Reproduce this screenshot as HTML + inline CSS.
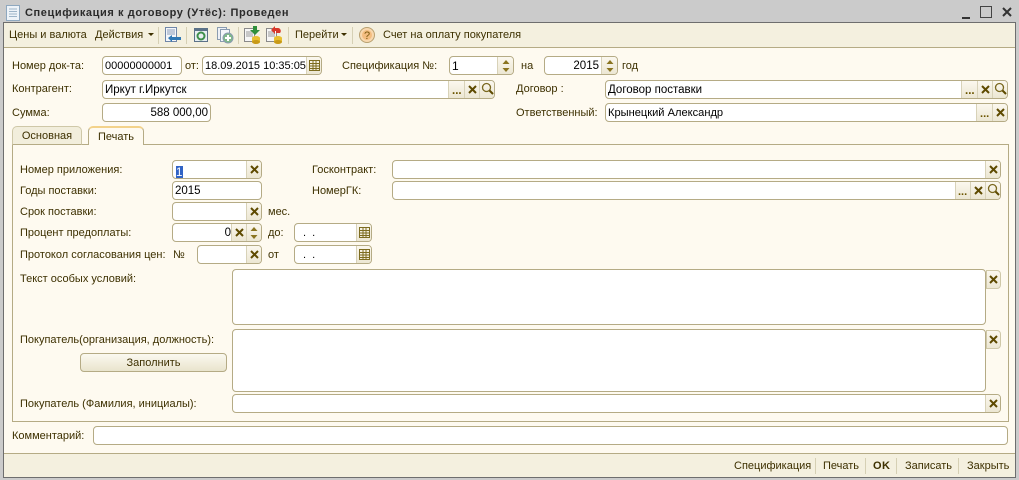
<!DOCTYPE html>
<html><head><meta charset="utf-8"><style>
html,body{margin:0;padding:0}
body{width:1019px;height:480px;position:relative;overflow:hidden;background:#cbcbcb;font:11px/14px "Liberation Sans",sans-serif;color:#3d3000}
div,span.a,svg{position:absolute}
.t{white-space:nowrap}
.f{background:#fff;border:1px solid #b5ab85;border-radius:4px;box-sizing:border-box;color:#000;white-space:nowrap;overflow:hidden;line-height:18px;padding-left:2px;font-size:11px}
.r{text-align:right;padding:0 2px 0 0}
.b{background:linear-gradient(#fbf8ee,#ece7d3);border-left:1px solid #d8d2b8;box-sizing:border-box;top:0;bottom:0}
.sep{width:1px;background:#d6d0b4;top:27px;height:17px}
.sep2{width:1px;background:#d6d0b4;top:458px;height:16px}
</style></head><body>
<!-- title -->
<svg style="left:6px;top:5px" width="14" height="16"><rect x=".5" y=".5" width="13" height="15" fill="#eef3f8" stroke="#8fa8bf"/><path d="M3 4h8M3 6.500h8M3 9h8M3 11.500h8" stroke="#9db4c8"/></svg>
<div class="t" style="left:25px;top:6px;font-weight:bold;font-size:11px;color:#2b2b2b;letter-spacing:.6px">Спецификация к договору (Утёс): Проведен</div>
<div style="left:962px;top:17px;width:8px;height:2px;background:#333"></div>
<svg style="left:980px;top:6px" width="32" height="13"><rect x=".5" y=".5" width="11" height="11" fill="none" stroke="#444"/><path d="M23 2l8 8M31 2l-8 8" stroke="#333" stroke-width="2"/></svg>
<!-- frame -->
<div style="left:3px;top:22px;width:1013px;height:456px;background:#fefaf0;border:1px solid #6e6e6e;box-sizing:border-box"></div>
<div style="left:4px;top:23px;width:1011px;height:24px;background:#f4f0df;border-bottom:1px solid #b5ab85"></div>
<div style="left:4px;top:453px;width:1011px;height:24px;background:#f4f0df;border-top:1px solid #b5ab85;box-sizing:border-box"></div>
<!-- toolbar -->
<div class="t" style="left:9px;top:28px">Цены и валюта</div>
<div class="t" style="left:95px;top:28px">Действия</div>
<svg style="left:148px;top:33px" width="6" height="4"><path d="M0 0h6l-3 3z" fill="#3d3000"/></svg>
<div class="sep" style="left:158px"></div>
<svg style="left:164px;top:27px" width="18" height="17"><rect x="1.500" y=".5" width="11" height="14" fill="#f4f6fa" stroke="#6f86a8"/><path d="M3 3h8M3 5h8M3 7h8" stroke="#8a9cb8"/><path d="M4 11l4-3v2h9v3H8v2z" fill="#2f78b4"/></svg>
<div class="sep" style="left:186px"></div>
<svg style="left:194px;top:28px" width="14" height="15"><rect x=".5" y=".5" width="13" height="13" fill="#e8eef2" stroke="#5b7288"/><rect x="1" y="1" width="12" height="2" fill="#5b7288"/><circle cx="7" cy="8" r="3.500" fill="none" stroke="#3d8f4a" stroke-width="2"/></svg>
<svg style="left:217px;top:27px" width="17" height="17"><rect x=".5" y=".5" width="9" height="12" fill="#eef1f6" stroke="#8a9cb0"/><rect x="3.500" y="2.500" width="9" height="12" fill="#f4f6fa" stroke="#8a9cb0"/><circle cx="11" cy="11" r="5" fill="#7fb88a" stroke="#8a9cb0"/><path d="M8 11h6M11 8v6" stroke="#fff" stroke-width="2"/></svg>
<div class="sep" style="left:238px"></div>
<svg style="left:244px;top:26px" width="17" height="18"><rect x=".5" y="2.500" width="10" height="13" fill="#f6f6f6" stroke="#8a8a8a"/><path d="M2 6h7M2 8h7M2 10h7" stroke="#999"/><path d="M9 0h4v4h3l-5 5-5-5h3z" fill="#2f8f3a"/><ellipse cx="12" cy="12" rx="4" ry="2" fill="#e8c030"/><rect x="8" y="12" width="8" height="4" fill="#e8c030"/><ellipse cx="12" cy="16" rx="4" ry="2" fill="#c89a18"/></svg>
<svg style="left:266px;top:26px" width="17" height="18"><rect x=".5" y="2.500" width="10" height="13" fill="#f6f6f6" stroke="#8a8a8a"/><path d="M2 6h7M2 8h7M2 10h7" stroke="#999"/><path d="M5 4l4-4v2h3a3 3 0 0 1 2 5h-4v-2h-1v3z" fill="#d8382a"/><ellipse cx="12" cy="12" rx="4" ry="2" fill="#e8c030"/><rect x="8" y="12" width="8" height="4" fill="#e8c030"/><ellipse cx="12" cy="16" rx="4" ry="2" fill="#c89a18"/></svg>
<div class="sep" style="left:288px"></div>
<div class="t" style="left:295px;top:28px">Перейти</div>
<svg style="left:341px;top:33px" width="6" height="4"><path d="M0 0h6l-3 3z" fill="#3d3000"/></svg>
<div class="sep" style="left:352px"></div>
<svg style="left:359px;top:27px" width="16" height="16"><circle cx="8" cy="8" r="7.500" fill="#f8d8ae" stroke="#b8a070"/><circle cx="8" cy="8" r="5" fill="#f4bd80"/><text x="5" y="12" font-size="11" fill="#7a5a10" font-family="Liberation Sans">?</text></svg>
<div class="t" style="left:383px;top:28px">Счет на оплату покупателя</div>
<!-- header fields -->
<div class="t" style="left:12px;top:59px">Номер док-та:</div>
<div class="f" style="left:102px;top:56px;width:80px;height:19px">00000000001</div>
<div class="t" style="left:185px;top:59px">от:</div>
<div class="f" style="left:202px;top:56px;width:120px;height:19px">18.09.2015 10:35:05<div class="b" style="right:0;width:15px"><svg style="left:2px;top:2px" width="11" height="13"><path d="M.5 1.500h10v10H.5zM.5 4.500h10M.5 7h10M.5 9.500h10M4 1.500v10M7 1.500v10" fill="none" stroke="#7d6c20"/></svg></div></div>
<div class="t" style="left:342px;top:59px">Спецификация №:</div>
<div class="f" style="left:449px;top:56px;width:65px;height:19px;font-size:12px">1<div class="b" style="right:0;width:16px"><svg style="left:4px;top:3px" width="8" height="12"><path d="M4 0l3.500 4H.5zM.5 8h7L4 12z" fill="#8a7420"/></svg></div></div>
<div class="t" style="left:521px;top:59px">на</div>
<div class="f r" style="left:544px;top:56px;width:74px;height:19px;padding-right:18px;font-size:11.500px">2015<div class="b" style="right:0;width:16px"><svg style="left:4px;top:3px" width="8" height="12"><path d="M4 0l3.500 4H.5zM.5 8h7L4 12z" fill="#8a7420"/></svg></div></div>
<div class="t" style="left:622px;top:59px">год</div>

<div class="t" style="left:12px;top:82px">Контрагент:</div>
<div class="f" style="left:102px;top:80px;width:393px;height:19px;font-size:11.500px">Иркут г.Иркутск<div class="b" style="right:30px;width:16px;color:#6b5500;font-weight:bold;line-height:20px;padding-left:3px">...</div><div class="b" style="right:15px;width:15px"><svg style="left:3px;top:4px" width="9" height="9"><path d="M1 1l7 7M8 1L1 8" stroke="#5e4a00" stroke-width="2"/></svg></div><div class="b" style="right:0;width:15px"><svg style="left:1px;top:1px" width="13" height="13"><circle cx="5.500" cy="5.500" r="4" fill="none" stroke="#7a6820" stroke-width="1.300"/><path d="M8.500 8.500l3.500 3.500" stroke="#5e4a00" stroke-width="2"/></svg></div></div>
<div class="t" style="left:516px;top:82px">Договор :</div>
<div class="f" style="left:605px;top:80px;width:403px;height:19px;font-size:11.500px">Договор поставки<div class="b" style="right:30px;width:16px;color:#6b5500;font-weight:bold;line-height:20px;padding-left:3px">...</div><div class="b" style="right:15px;width:15px"><svg style="left:3px;top:4px" width="9" height="9"><path d="M1 1l7 7M8 1L1 8" stroke="#5e4a00" stroke-width="2"/></svg></div><div class="b" style="right:0;width:15px"><svg style="left:1px;top:1px" width="13" height="13"><circle cx="5.500" cy="5.500" r="4" fill="none" stroke="#7a6820" stroke-width="1.300"/><path d="M8.500 8.500l3.500 3.500" stroke="#5e4a00" stroke-width="2"/></svg></div></div>
<div class="t" style="left:12px;top:106px">Сумма:</div>
<div class="f r" style="left:102px;top:103px;width:109px;height:19px;font-size:11.500px">588 000,00</div>
<div class="t" style="left:516px;top:106px">Ответственный:</div>
<div class="f" style="left:605px;top:103px;width:403px;height:19px;font-size:11.100px">Крынецкий Александр<div class="b" style="right:15px;width:16px;color:#6b5500;font-weight:bold;line-height:20px;padding-left:3px">...</div><div class="b" style="right:0;width:15px"><svg style="left:3px;top:4px" width="9" height="9"><path d="M1 1l7 7M8 1L1 8" stroke="#5e4a00" stroke-width="2"/></svg></div></div>
<!-- tabs -->
<div style="left:12px;top:144px;width:997px;height:278px;border:1px solid #b5ab85;box-sizing:border-box"></div>
<div class="t" style="left:12px;top:126px;width:70px;height:19px;background:#f2eedc;border:1px solid #cfc8a8;border-bottom:1px solid #b5ab85;border-radius:5px 5px 0 0;box-sizing:border-box;text-align:center;line-height:19px">Основная</div>
<div class="t" style="left:88px;top:126px;width:56px;height:19px;background:#fefaf0;border:1px solid #b5ab85;border-top:2px solid #f3d28a;border-bottom:0;border-radius:5px 5px 0 0;box-sizing:border-box;text-align:center;line-height:18px">Печать</div>
<!-- panel -->
<div class="t" style="left:20px;top:163px">Номер приложения:</div>
<div class="f" style="left:172px;top:160px;width:90px;height:19px;font-size:11.500px"><span style="background:#3163c5;color:#fff;margin-left:1px;display:inline-block;width:7px;height:15px;line-height:15px;vertical-align:-3px">1</span><div class="b" style="right:0;width:15px"><svg style="left:3px;top:4px" width="9" height="9"><path d="M1 1l7 7M8 1L1 8" stroke="#5e4a00" stroke-width="2"/></svg></div></div>
<div class="t" style="left:20px;top:184px">Годы поставки:</div>
<div class="f" style="left:172px;top:181px;width:90px;height:19px;font-size:11.500px">2015</div>
<div class="t" style="left:20px;top:205px">Срок поставки:</div>
<div class="f" style="left:172px;top:202px;width:90px;height:19px"><div class="b" style="right:0;width:15px"><svg style="left:3px;top:4px" width="9" height="9"><path d="M1 1l7 7M8 1L1 8" stroke="#5e4a00" stroke-width="2"/></svg></div></div>
<div class="t" style="left:268px;top:205px">мес.</div>
<div class="t" style="left:20px;top:226px">Процент предоплаты:</div>
<div class="f r" style="left:172px;top:223px;width:90px;height:19px;padding-right:30px;font-size:11.500px">0<div class="b" style="right:15px;width:15px"><svg style="left:3px;top:4px" width="9" height="9"><path d="M1 1l7 7M8 1L1 8" stroke="#5e4a00" stroke-width="2"/></svg></div><div class="b" style="right:0;width:15px"><svg style="left:3px;top:3px" width="8" height="12"><path d="M4 0l3.500 4H.5zM.5 8h7L4 12z" fill="#8a7420"/></svg></div></div>
<div class="t" style="left:268px;top:226px">до:</div>
<div class="f" style="left:294px;top:223px;width:78px;height:19px;padding-left:8px">.&nbsp;&nbsp;.<div class="b" style="right:0;width:15px"><svg style="left:2px;top:2px" width="11" height="13"><path d="M.5 1.500h10v10H.5zM.5 4.500h10M.5 7h10M.5 9.500h10M4 1.500v10M7 1.500v10" fill="none" stroke="#7d6c20"/></svg></div></div>
<div class="t" style="left:20px;top:248px">Протокол согласования цен:</div>
<div class="t" style="left:173px;top:248px">№</div>
<div class="f" style="left:197px;top:245px;width:65px;height:19px"><div class="b" style="right:0;width:15px"><svg style="left:3px;top:4px" width="9" height="9"><path d="M1 1l7 7M8 1L1 8" stroke="#5e4a00" stroke-width="2"/></svg></div></div>
<div class="t" style="left:268px;top:248px">от</div>
<div class="f" style="left:294px;top:245px;width:78px;height:19px;padding-left:8px">.&nbsp;&nbsp;.<div class="b" style="right:0;width:15px"><svg style="left:2px;top:2px" width="11" height="13"><path d="M.5 1.500h10v10H.5zM.5 4.500h10M.5 7h10M.5 9.500h10M4 1.500v10M7 1.500v10" fill="none" stroke="#7d6c20"/></svg></div></div>

<div class="t" style="left:312px;top:163px">Госконтракт:</div>
<div class="f" style="left:392px;top:160px;width:609px;height:19px"><div class="b" style="right:0;width:15px"><svg style="left:3px;top:4px" width="9" height="9"><path d="M1 1l7 7M8 1L1 8" stroke="#5e4a00" stroke-width="2"/></svg></div></div>
<div class="t" style="left:312px;top:184px">НомерГК:</div>
<div class="f" style="left:392px;top:181px;width:609px;height:19px"><div class="b" style="right:30px;width:15px;color:#6b5500;font-weight:bold;line-height:20px;padding-left:2px">...</div><div class="b" style="right:15px;width:15px"><svg style="left:3px;top:4px" width="9" height="9"><path d="M1 1l7 7M8 1L1 8" stroke="#5e4a00" stroke-width="2"/></svg></div><div class="b" style="right:0;width:15px"><svg style="left:1px;top:1px" width="13" height="13"><circle cx="5.500" cy="5.500" r="4" fill="none" stroke="#7a6820" stroke-width="1.300"/><path d="M8.500 8.500l3.500 3.500" stroke="#5e4a00" stroke-width="2"/></svg></div></div>

<div class="t" style="left:20px;top:272px">Текст особых условий:</div>
<div class="f" style="left:232px;top:269px;width:754px;height:56px"></div>
<div class="f" style="left:986px;top:270px;width:15px;height:19px;padding:0;border-color:#cfc8a8;border-radius:0 4px 4px 0;background:linear-gradient(#fbf8ee,#ece7d3)"><svg style="left:2px;top:4px" width="9" height="9"><path d="M1 1l7 7M8 1L1 8" stroke="#5e4a00" stroke-width="2"/></svg></div>
<div class="t" style="left:20px;top:333px">Покупатель(организация, должность):</div>
<div class="f" style="left:232px;top:329px;width:754px;height:63px"></div>
<div class="f" style="left:986px;top:330px;width:15px;height:19px;padding:0;border-color:#cfc8a8;border-radius:0 4px 4px 0;background:linear-gradient(#fbf8ee,#ece7d3)"><svg style="left:2px;top:4px" width="9" height="9"><path d="M1 1l7 7M8 1L1 8" stroke="#5e4a00" stroke-width="2"/></svg></div>
<div class="t" style="left:80px;top:353px;width:147px;height:19px;background:linear-gradient(#fbf9f0,#e9e4cd);border:1px solid #b5ab85;border-radius:4px;box-sizing:border-box;text-align:center;line-height:18px">Заполнить</div>
<div class="t" style="left:20px;top:397px">Покупатель (Фамилия, инициалы):</div>
<div class="f" style="left:232px;top:394px;width:769px;height:19px"><div class="b" style="right:0;width:15px"><svg style="left:3px;top:4px" width="9" height="9"><path d="M1 1l7 7M8 1L1 8" stroke="#5e4a00" stroke-width="2"/></svg></div></div>
<div class="t" style="left:12px;top:429px">Комментарий:</div>
<div class="f" style="left:93px;top:426px;width:915px;height:19px"></div>
<!-- footer -->
<div class="t" style="left:734px;top:459px">Спецификация</div>
<div class="sep2" style="left:815px"></div>
<div class="t" style="left:823px;top:459px">Печать</div>
<div class="sep2" style="left:865px"></div>
<div class="t" style="left:873px;top:459px;font-weight:bold;letter-spacing:.5px">OK</div>
<div class="sep2" style="left:896px"></div>
<div class="t" style="left:905px;top:459px">Записать</div>
<div class="sep2" style="left:958px"></div>
<div class="t" style="left:967px;top:459px">Закрыть</div>
</body></html>
